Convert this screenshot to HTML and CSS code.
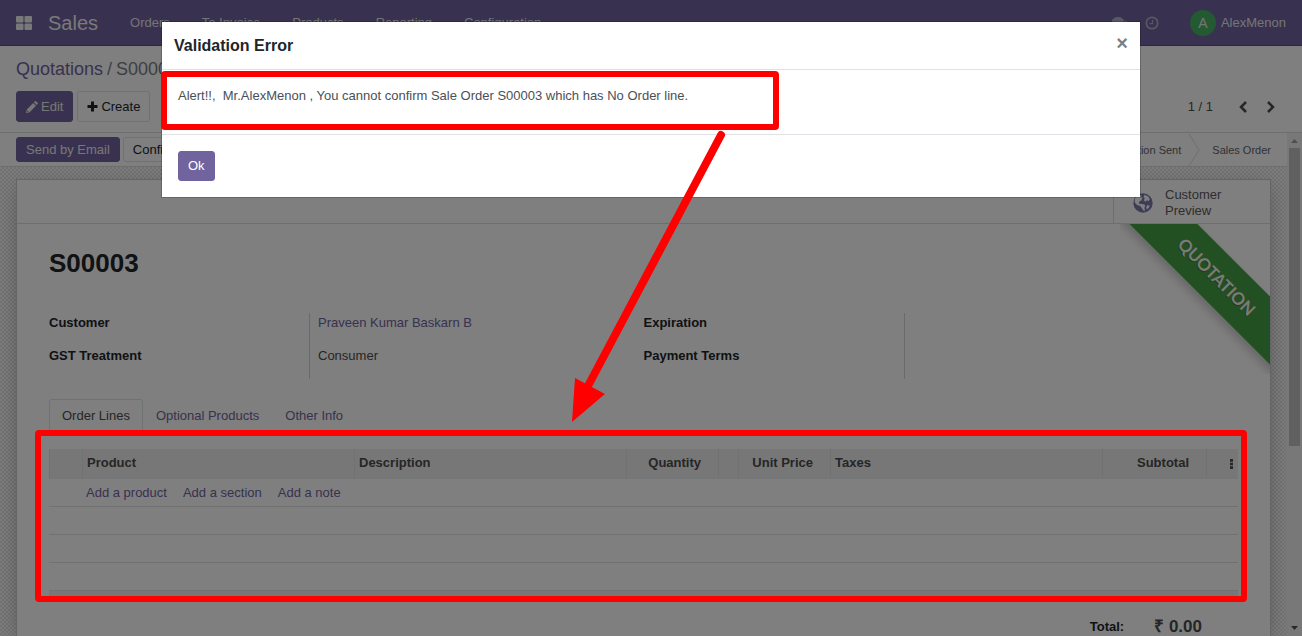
FILE: index.html
```html
<!DOCTYPE html>
<html lang="en">
<head>
<meta charset="utf-8">
<meta name="viewport" content="width=device-width, initial-scale=1">
<title>S00003 - Sales</title>
<link rel="stylesheet" href="styles.css">
</head>
<body>
<div class="app">
  <header class="navbar">
    <button class="apps-btn" type="button" aria-label="Apps">
      <svg width="16" height="14" viewBox="0 0 16 14"><rect width="7.5" height="6.5" rx="1"/><rect x="8.5" width="7.5" height="6.5" rx="1"/><rect y="7.5" width="7.5" height="6.5" rx="1"/><rect x="8.5" y="7.5" width="7.5" height="6.5" rx="1"/></svg>
    </button>
    <a class="brand" href="#">Sales</a>
    <nav class="menu">
      <a href="#">Orders</a><a href="#">To Invoice</a><a href="#">Products</a><a href="#">Reporting</a><a href="#">Configuration</a>
    </nav>
    <div class="systray">
      <button type="button" aria-label="Messages"><svg width="16" height="14" viewBox="0 0 16 14"><path d="M6 1c3.300 0 6 1.900 6 4.300S9.300 9.500 6 9.500c-.5 0-1 0-1.500-.1C3.300 10.200 2 10.600.8 10.700c.6-.6 1-1.200 1.200-2.100C.8 7.800 0 6.600 0 5.300 0 2.900 2.700 1 6 1zM13 4.200c1.800.8 3 2.100 3 3.600 0 1.300-.8 2.500-2 3.200.2.900.6 1.400 1.200 2-1.200-.1-2.500-.5-3.700-1.300-2 .3-3.900-.1-5.300-1.100 4 .1 7.100-2.500 6.800-6.400z"/></svg></button>
      <button type="button" aria-label="Activities"><svg width="14" height="14" viewBox="0 0 14 14"><circle cx="7" cy="7" r="5.700" fill="none" stroke="currentColor" stroke-width="1.700"/><path d="M7.500 3.700v4H4.500" fill="none" stroke="currentColor" stroke-width="1.200"/></svg></button>
      <button class="user" type="button"><span class="avatar">A</span>AlexMenon</button>
    </div>
  </header>

  <section class="control-panel">
    <div class="breadcrumb"><a href="#">Quotations</a><span class="slash">/</span><span>S00003</span></div>
    <div class="cp-row">
      <div class="cp-buttons">
        <button class="btn btn-primary" type="button"><svg width="12" height="12" viewBox="0 0 12 12"><path fill-rule="evenodd" d="M0 12l.8-3.600L7.200 2l2.800 2.800-6.400 6.400zM1.500 9.200L1.100 10.900l1.700-.4zM7.900 1.300L9 .3q.5-.5 1 0l1.700 1.700q.5.5 0 1l-1 1.100z"/></svg>Edit</button>
        <button class="btn btn-light" type="button"><svg width="11" height="11" viewBox="0 0 11 11"><path d="M4 .5h3V4h3.500v3H7v3.500H4V7H.5V4H4z"/></svg>Create</button>
      </div>
      <div class="pager">
        <span>1 / 1</span>
        <button type="button" aria-label="Previous"><svg width="8" height="12" viewBox="0 0 8 12"><path d="M7 1L2 6l5 5"/></svg></button>
        <button type="button" aria-label="Next"><svg width="8" height="12" viewBox="0 0 8 12"><path d="M1 1l5 5-5 5"/></svg></button>
      </div>
    </div>
  </section>

  <div class="content">
    <main class="form-view">
      <div class="statusbar">
        <button class="btn btn-small btn-primary" type="button">Send by Email</button>
        <button class="btn btn-small btn-light" type="button">Confirm</button>
        <ol class="stages">
          <li>Quotation</li>
          <li class="sep"><svg width="12" height="32" viewBox="0 0 12 32"><path d="M1 0l10 16L1 32"/></svg></li>
          <li>Quotation Sent</li>
          <li class="sep"><svg width="12" height="32" viewBox="0 0 12 32"><path d="M1 0l10 16L1 32"/></svg></li>
          <li>Sales Order</li>
        </ol>
      </div>
      <div class="sheet-bg">
        <article class="sheet">
          <div class="button-box">
            <button class="stat" type="button">
              <svg width="20" height="20" viewBox="0 0 20 20"><circle cx="10" cy="10" r="9.700" fill="#7c7bad"/><path fill="#fff" d="M3.500 3.700C5 2.200 7 1.300 9 1.200l2 1-1.300 1.600 1.500.8-2 2.400-2.400.5-.8 2 2 .8 2.500 1.300.9 1.600-1.500 1.800-.4 2.500-1 .6-1.200-3.500-.8-2.600-2.600-2L2.300 7z" transform="rotate(-18 10 10)"/><path fill="#fff" d="M11.500 1.800l4 2 1.300 2.600-1.200 1.500-1.800-.6-1.300 1.400-1.700-1.500 1-1.900-1.200-1.400zM14.500 12l2.200.6-.8 2.100-2 1.500-.9-1.400z"/></svg>
              <span>Customer<br>Preview</span>
            </button>
          </div>
          <div class="sheet-body">
            <div class="ribbon"><span>Quotation</span></div>
            <h1>S00003</h1>
            <div class="groups">
              <dl class="group">
                <dt>Customer</dt><dd><a href="#">Praveen Kumar Baskarn B</a></dd>
                <dt>GST Treatment</dt><dd>Consumer</dd>
              </dl>
              <dl class="group">
                <dt>Expiration</dt><dd></dd>
                <dt>Payment Terms</dt><dd></dd>
              </dl>
            </div>
            <div class="tabs">
              <a class="tab active" href="#">Order Lines</a><a class="tab" href="#">Optional Products</a><a class="tab" href="#">Other Info</a>
            </div>
            <div class="lines">
              <table>
                <colgroup><col class="c-handle"><col><col><col class="c-num"><col class="c-tiny"><col class="c-num"><col><col class="c-sub"><col class="c-menu"></colgroup>
                <thead>
                  <tr><th></th><th>Product</th><th>Description</th><th class="num">Quantity</th><th></th><th class="num">Unit Price</th><th>Taxes</th><th class="num">Subtotal</th><th class="opt"><button type="button" aria-label="Optional columns"><svg width="3" height="10" viewBox="0 0 3 10"><path d="M0 0h3v2.700H0zM0 3.700h3v2.600H0zM0 7.300h3V10H0z"/></svg></button></th></tr>
                </thead>
                <tbody>
                  <tr><td></td><td colspan="8" class="adds"><a href="#">Add a product</a><a href="#">Add a section</a><a href="#">Add a note</a></td></tr>
                  <tr><td colspan="9"></td></tr>
                  <tr><td colspan="9"></td></tr>
                  <tr><td colspan="9"></td></tr>
                </tbody>
                <tfoot><tr><td colspan="9"></td></tr></tfoot>
              </table>
              <div class="mark mark-lines"></div>
            </div>
            <div class="total"><span>Total:</span><strong>₹ 0.00</strong></div>
          </div>
        </article>
      </div>
    </main>
    <div class="scrollbar">
      <svg width="7" height="4" viewBox="0 0 7 4"><path d="M0 4h7L3.500 0z"/></svg>
      <div class="track"><div class="thumb"></div></div>
      <svg class="down" width="7" height="4" viewBox="0 0 7 4"><path d="M0 0h7L3.500 4z"/></svg>
    </div>
  </div>
</div>

<div class="backdrop">
  <div class="modal" role="dialog" aria-modal="true" aria-labelledby="dlg-title">
    <header class="modal-header"><h2 id="dlg-title">Validation Error</h2><button type="button" class="close" aria-label="Close">×</button></header>
    <div class="modal-body">Alert!!,&nbsp; Mr.AlexMenon , You cannot confirm Sale Order S00003 which has No Order line.<div class="mark mark-message"></div></div>
    <footer class="modal-footer"><button class="btn btn-primary btn-ok" type="button">Ok</button></footer>
    <svg class="arrow" width="160" height="300" viewBox="0 0 160 300"><path d="M153 7L20 258" fill="none" stroke="#f00" stroke-width="8" stroke-linecap="round"/><path d="M7 250l30 16L4 294z" fill="#f00"/></svg>
  </div>
</div>
</body>
</html>
```

FILE: styles.css
```css
* { box-sizing: border-box; }
body { margin: 0; font: 13px/20px "Liberation Sans", Arial, sans-serif; color: #4c4c4c; overflow: hidden; }
a { color: #71639e; text-decoration: none; }
button { font: inherit; color: inherit; background: none; border: 0; padding: 0; margin: 0; }
svg { display: block; fill: currentColor; }

.app { height: 100vh; display: flex; flex-direction: column; background: #fff; overflow: hidden; }

.navbar { flex: none; height: 46px; display: flex; align-items: center; padding: 0 16px; background: #71639e; border-bottom: 1px solid #5a4f7f; color: #fff; }
.navbar a { color: #fff; }
.apps-btn { color: #f2f2f2; }
.navbar .brand { font-size: 20px; margin: 0 32px 0 16px; color: #f2f2f2; }
.menu { display: flex; gap: 32px; flex: 1; }
.navbar .menu a { color: #e8e8ee; }
.systray { display: flex; align-items: center; color: #e0dfe8; }
.systray button { display: flex; align-items: center; opacity: .6; margin-right: 17px; }
.systray .user { opacity: 1; margin: 0 0 0 14px; gap: 5px; color: #e8e8ee; }
.avatar { width: 26px; height: 26px; border-radius: 50%; background: #46b564; font-size: 14px; line-height: 26px; text-align: center; }

.control-panel { flex: none; padding: 12px 16px 10px; border-bottom: 1px solid #dcdcdc; }
.breadcrumb { font-size: 18px; line-height: 22px; margin-bottom: 11px; color: #7b8084; }
.slash { margin: 0 4px; }
.cp-row { display: flex; justify-content: space-between; align-items: center; }
.cp-buttons { display: flex; gap: 4px; }
.btn { display: inline-flex; align-items: center; gap: 3px; height: 31px; padding: 0 9px; border: 1px solid #dee2e6; border-radius: 3px; color: #212529; }
.btn-primary { background: #71639e; border-color: #71639e; color: #fff; }
.app .btn-primary { color: #eee; }
.btn-small { height: 25px; }
.pager { display: flex; align-items: center; margin-right: 11px; }
.pager button { margin-left: 20px; }
.pager span + button { margin-left: 26px; }
.pager path { fill: none; stroke: #4c4c4c; stroke-width: 2.500; }

.content { flex: 1; min-height: 0; display: flex; }
.form-view { flex: 1; min-width: 0; display: flex; flex-direction: column; }
.statusbar { flex: none; height: 34px; display: flex; align-items: center; gap: 3px; padding: 0 16px; border-bottom: 1px solid #dcdcdc; }
.stages { display: flex; align-items: center; gap: 12px; margin: 0 0 0 auto; padding: 0; list-style: none; font-size: 11px; line-height: 18px; color: #5f6468; }
.sep { margin-left: -5px; }
.sep path { fill: none; stroke: #dcdcdc; }

.sheet-bg { flex: 1; padding: 12px 16px 0; background: repeating-conic-gradient(#e4e4e4 0 25%, #f8f8f8 0 50%) 0 0 / 4px 4px; }
.sheet { min-height: 100%; background: #fff; border: 1px solid #c8c8d3; border-bottom: 0; box-shadow: 0 5px 20px -5px rgba(0, 0, 0, .35); }
.button-box { display: flex; justify-content: flex-end; border-bottom: 1px solid #dcdcdc; }
.stat { display: flex; align-items: center; gap: 12px; width: 157px; height: 43px; padding: 2px 0 0 19px; border-left: 1px solid #dcdcdc; line-height: 16px; text-align: left; color: #5c5c5c; }
.sheet-body { position: relative; padding: 23px 32px 0; }
.ribbon { position: absolute; top: 0; right: 0; width: 150px; height: 150px; overflow: hidden; }
.ribbon span { position: absolute; left: -16px; top: 29px; width: 225px; padding: 15px 0; background: #47a045; box-shadow: 0 5px 10px rgba(0, 0, 0, .2); color: #f4f4f4; font: 700 17px/18px Lato, sans-serif; text-align: center; text-transform: uppercase; text-shadow: 0 1px 1px rgba(0, 0, 0, .3); transform: rotate(45deg); }
h1 { margin: 0 0 34px; font-size: 26px; line-height: 32px; color: #212529; }
.groups { display: grid; grid-template-columns: 1fr 1fr; margin-bottom: 20px; }
.group { display: grid; grid-template-columns: 260px 1fr; grid-auto-rows: 33px; margin: 0; }
dt { font-weight: 700; color: #212529; }
dd { margin: 0; padding-left: 8px; border-left: 1px solid #d5d5d5; }
.tabs { display: flex; border-bottom: 1px solid #dee2e6; }
.tab { padding: 6px 12px; border: 1px solid transparent; border-bottom: 0; }
.tab.active { color: #4c4c4c; border-color: #dee2e6; border-radius: 3px 3px 0 0; }
.lines { position: relative; margin-top: 16px; }

table { width: 100%; table-layout: fixed; border-collapse: separate; border-spacing: 0; }
.c-handle { width: 33px; }
.c-num { width: 92px; }
.c-tiny { width: 20px; }
.c-sub { width: 104px; }
.c-menu { width: 32px; }
th { height: 30px; padding: 0 4px; text-align: left; background: #eee; border-left: 1px solid #e2e2e2; border-bottom: 2px solid #e9ecef; color: #4c4c4c; }
th.num { text-align: right; padding-right: 17px; }
th.opt { padding: 2px 5px 0 0; }
th.opt button { display: block; margin-left: auto; }
td { height: 28px; padding: 0; border-bottom: 1px solid #e2e2e2; }
.adds { padding-left: 4px; }
.adds a { margin-right: 16px; }
tfoot td { height: 8px; background: #eee; border: 0; }
.total { display: flex; align-items: center; justify-content: flex-end; gap: 30px; padding: 18px 36px 0 0; font-weight: 700; color: #212529; }
.total strong { font-size: 17px; color: #4c4c4c; }

.scrollbar { flex: none; width: 15px; display: flex; flex-direction: column; align-items: center; gap: 5px; padding: 6px 0; background: #f1f1f1; color: #a0a0a0; }
.scrollbar .down { color: #505050; }
.track { flex: 1; width: 11px; }
.thumb { height: 63%; background: #c1c1c1; }

.backdrop { position: fixed; inset: 0; display: flex; justify-content: center; align-items: flex-start; padding: 21px 16px; background: rgba(0, 0, 0, .5); }
.modal { position: relative; flex: 0 1 980px; background: #fff; background-clip: padding-box; border: 1px solid rgba(0, 0, 0, .2); }
.modal-header { display: flex; align-items: center; justify-content: space-between; height: 48px; padding: 0 12px; border-bottom: 1px solid #dee2e6; }
h2 { margin: 0; font-size: 16px; line-height: 24px; color: #212529; }
.close { font-size: 20px; font-weight: 700; line-height: 20px; color: #7f7f7f; padding-bottom: 6px; }
.modal-body { position: relative; padding: 16px 16px 28px; color: #495057; }
.modal-footer { display: flex; padding: 16px; border-top: 1px solid #dee2e6; }
.btn-ok { height: 30px; }

.mark { position: absolute; border: 6px solid #f00; border-radius: 4px; pointer-events: none; }
.mark-message { left: -1px; top: 1px; width: 618px; height: 59px; }
.mark-lines { z-index: 10; left: -14px; right: -9px; top: -19px; bottom: -3px; }
.arrow { position: absolute; left: 406px; top: 106px; pointer-events: none; }
```
